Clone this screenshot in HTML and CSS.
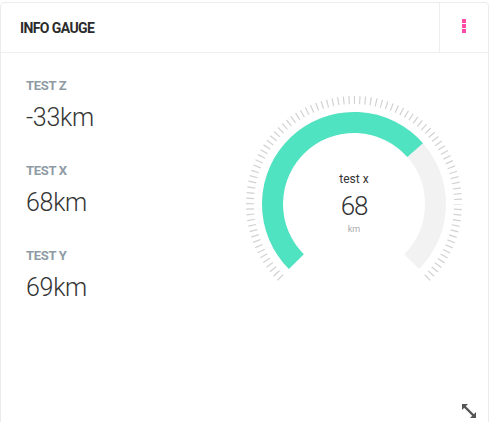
FILE: index.html
```html
<!DOCTYPE html>
<html>
<head>
<meta charset="utf-8">
<link rel="stylesheet" href="styles.css">
</head>
<body>
<div class="card">
  <div class="header">
    <div class="title">INFO GAUGE</div>
    <div class="menu"><span class="dot"></span><span class="dot"></span><span class="dot"></span></div>
  </div>
  <div class="content">
    <div class="stats">
      <div class="stat"><div class="label">TEST Z</div><div class="value">-33km</div></div>
      <div class="stat"><div class="label">TEST X</div><div class="value">68km</div></div>
      <div class="stat"><div class="label">TEST Y</div><div class="value">69km</div></div>
    </div>
    <svg class="gauge" width="240" height="240" viewBox="0 0 240 240">
      <defs>
        <clipPath id="tickclip">
          <polygon points="120,120 -35,280 -40,-40 280,-40 275,280"/>
        </clipPath>
      </defs>
      <circle cx="120" cy="120" r="104" fill="none" stroke="#d2d2d2" stroke-width="8" stroke-dasharray="1.2 4.2453" stroke-dashoffset="0.6" clip-path="url(#tickclip)"/>
      <path d="M 62.37 177.63 A 81.5 81.5 0 1 1 177.63 177.63" fill="none" stroke="#f2f2f2" stroke-width="21"/>
      <path d="M 62.37 177.63 A 81.5 81.5 0 1 1 181.13 66.10" fill="none" stroke="#50e3c2" stroke-width="21"/>
      <text class="g-name" x="120" y="99" text-anchor="middle">test x</text>
      <text class="g-value" x="120" y="131" text-anchor="middle">68</text>
      <text class="g-unit" x="120" y="148" text-anchor="middle">km</text>
    </svg>
  </div>
  <svg class="resize" width="18" height="18" viewBox="0 0 18 18">
    <path d="M3 3 L15 15" stroke="#555" stroke-width="2.4" fill="none"/>
    <path d="M2 2 L8 2 L2 8 Z" fill="#555"/>
    <path d="M16 16 L10 16 L16 10 Z" fill="#555"/>
  </svg>
</div>
</body>
</html>
```

FILE: styles.css
```css
html, body {
  margin: 0;
  padding: 0;
  background: #fff;
}
body {
  font-family: Roboto, "Liberation Sans", sans-serif;
  color: #333;
}
.card {
  position: relative;
  margin-top: 2px;
  width: 487px;
  height: 440px;
  border: 1px solid #ececec;
  border-radius: 4px;
  background: #fff;
}
.header {
  display: flex;
  height: 49px;
  border-bottom: 1px solid #eeeeee;
}
.title {
  flex: 1;
  display: flex;
  align-items: center;
  padding-left: 19px;
  font-size: 14px;
  font-weight: 700;
  letter-spacing: -0.6px;
  color: #2b2b2b;
}
.menu {
  width: 49px;
  border-left: 1px solid #eeeeee;
  display: flex;
  flex-direction: column;
  align-items: center;
  padding-top: 16px;
  gap: 1px;
  box-sizing: border-box;
}
.dot {
  width: 4px;
  height: 4px;
  background: #ff4da6;
}
.content {
  display: flex;
}
.stats {
  width: 208px;
  padding: 26px 0 0 25px;
  display: flex;
  flex-direction: column;
  gap: 31px;
}
.label {
  font-size: 13px;
  line-height: 14px;
  font-weight: 700;
  color: #8e9ba4;
  letter-spacing: -0.3px;
}
.value {
  margin-top: 10px;
  font-size: 25px;
  line-height: 30px;
  font-weight: 300;
  letter-spacing: -0.3px;
  color: #333;
}
.gauge {
  margin-top: 31px;
  display: block;
}
.g-name {
  font-family: Roboto, "Liberation Sans", sans-serif;
  font-size: 12px;
  fill: #333;
}
.g-value {
  font-family: Roboto, "Liberation Sans", sans-serif;
  font-size: 26px;
  font-weight: 300;
  letter-spacing: -1.2px;
  fill: #333;
}
.g-unit {
  font-family: Roboto, "Liberation Sans", sans-serif;
  font-size: 9px;
  fill: #aaa;
}
.resize {
  position: absolute;
  left: 459px;
  top: 399px;
}
```
